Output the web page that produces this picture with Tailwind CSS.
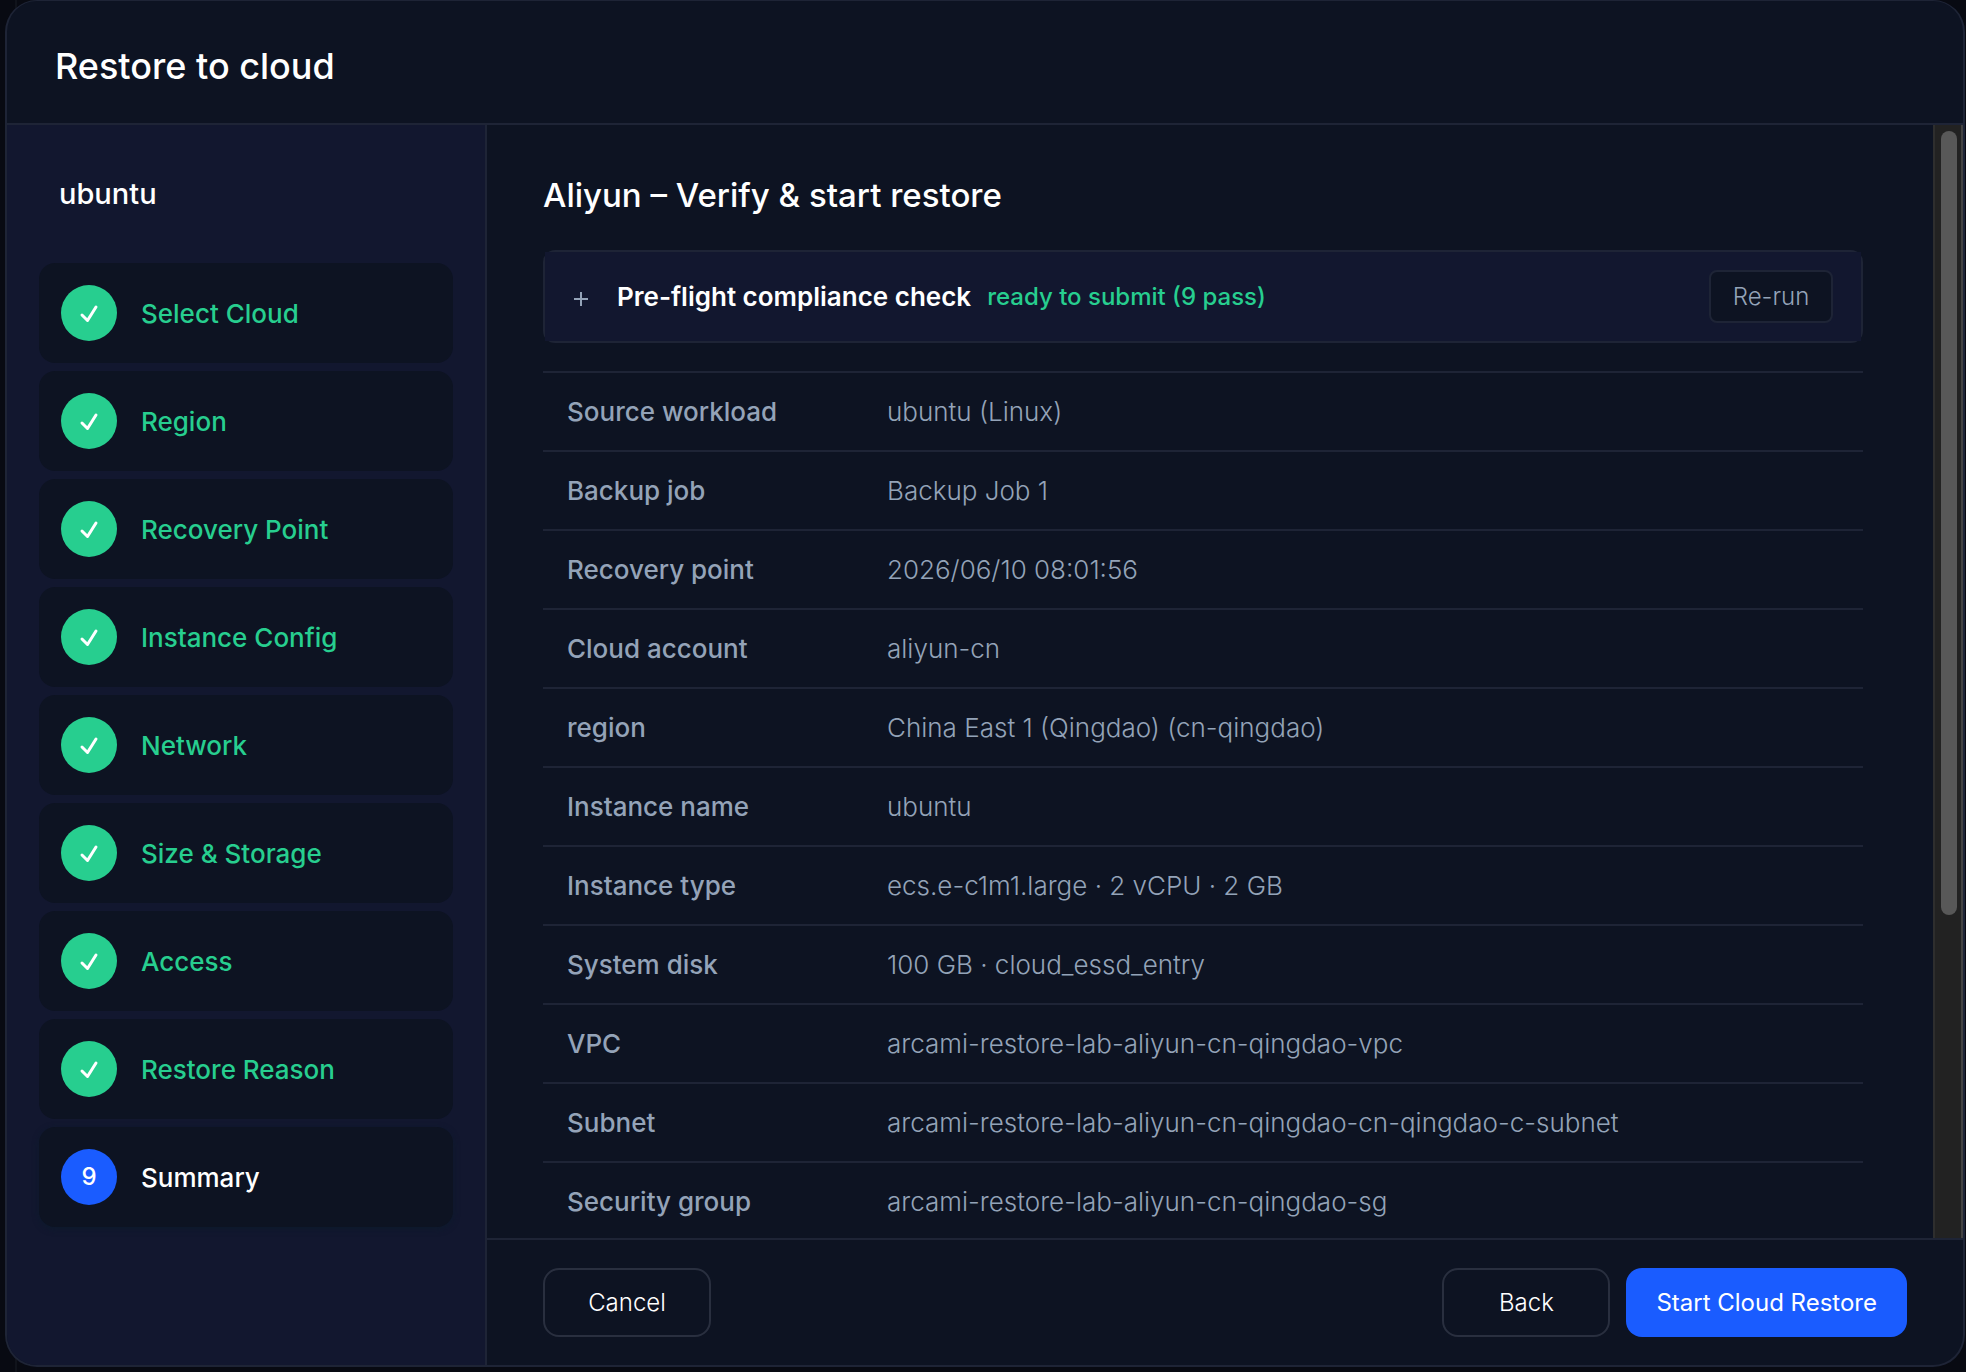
<!DOCTYPE html>
<html lang="en">
<head>
    <meta charset="UTF-8">
    <meta name="viewport" content="width=device-width, initial-scale=1.0">
    <title>Restore to cloud</title>
    <script src="https://cdn.jsdelivr.net/npm/@tailwindcss/browser@4"></script>
</head>
<body class="bg-[#080a12] font-['Inter','Noto_Sans',sans-serif] text-white">
    <!-- page behind the dialog -->
    <div class="absolute inset-y-0 left-[15px] w-[2px] bg-[#10131b]"></div>
    <div class="relative h-screen pl-[5px] pr-px pb-[5px]">
        <div role="dialog" aria-labelledby="title" class="flex h-full flex-col overflow-hidden rounded-[32px] border-2 border-t border-[#1e2436] bg-[#0d1322]">
            <header class="flex h-[124px] shrink-0 items-center border-b-2 border-[#1e2436] px-12 pt-4 pb-2">
                <h1 id="title" class="text-[36px] font-medium">Restore to cloud</h1>
            </header>
            <div class="flex min-h-0 flex-1">
                <aside class="w-[480px] shrink-0 border-r-2 border-[#1e2436] bg-[#12172f] px-8">
                    <h2 class="px-5 pt-12 pb-12 text-[29px] leading-[42px] font-medium">ubuntu</h2>
                    <ol id="steps" class="flex flex-col gap-2 text-[26px] font-medium"></ol>
                </aside>
                <div class="flex min-w-0 flex-1 flex-col">
                    <div class="flex min-h-0 flex-1">
                        <main class="min-w-0 flex-1 overflow-hidden pt-12 pr-[70px] pl-14">
                            <h2 class="text-[33px] leading-[45px] font-medium">Aliyun – Verify &amp; start restore</h2>
                            <section class="mt-8 rounded-xl border-2 border-[#1e2436]">
                                <div class="flex h-[89px] items-center bg-[#12172f] px-7">
                                    <button aria-label="Expand" class="mr-7 w-4">
                                        <svg class="mt-1 size-4" viewBox="0 0 16 16" fill="none" stroke="#94a3b8" stroke-width="2"><path d="M8 1v14M1 8h14"/></svg>
                                    </button>
                                    <span class="text-[26px] font-semibold">Pre-flight compliance check</span>
                                    <span class="ml-4 text-[24px] font-medium text-[#27ce8f]">ready to submit (9 pass)</span>
                                    <button class="ml-auto h-[53px] w-[124px] rounded-lg border-2 border-[#1e2436] bg-[#0d1322] text-[24px] font-light text-[#94a3b8]">Re-run</button>
                                </div>
                            </section>
                            <table class="mt-7 w-full border-t-2 border-[#1e2436] text-left text-[26px] text-[#94a3b8]">
                                <tbody id="summary"></tbody>
                            </table>
                        </main>
                        <!-- scrollbar -->
                        <div class="w-[30px] shrink-0 border-x-2 border-l-[#2e2e2e] border-r-[#424242] bg-[#222222] px-[6px] pt-[6px]">
                            <div class="h-[70.8%] w-4 rounded-full bg-[#585858]"></div>
                        </div>
                    </div>
                    <footer class="flex h-[127px] shrink-0 items-center gap-4 border-t-2 border-[#1e2436] px-14 text-[24px] font-light">
                        <button class="h-[69px] w-[168px] rounded-2xl border-2 border-[#292f3f]">Cancel</button>
                        <button class="ml-auto h-[69px] w-[168px] rounded-2xl border-2 border-[#292f3f]">Back</button>
                        <button class="h-[69px] rounded-2xl bg-[#1a5cff] px-[30px] font-normal">Start Cloud Restore</button>
                    </footer>
                </div>
            </div>
        </div>
    </div>

    <script>
        const steps = ['Select Cloud', 'Region', 'Recovery Point', 'Instance Config', 'Network', 'Size & Storage', 'Access', 'Restore Reason', 'Summary'];
        const rows = [
            ['Source workload', 'ubuntu (Linux)'],
            ['Backup job', 'Backup Job 1'],
            ['Recovery point', '2026/06/10 08:01:56'],
            ['Cloud account', 'aliyun-cn'],
            ['region', 'China East 1 (Qingdao) (cn-qingdao)'],
            ['Instance name', 'ubuntu'],
            ['Instance type', 'ecs.e-c1m1.large · 2 vCPU · 2 GB'],
            ['System disk', '100 GB · cloud_essd_entry'],
            ['VPC', 'arcami-restore-lab-aliyun-cn-qingdao-vpc'],
            ['Subnet', 'arcami-restore-lab-aliyun-cn-qingdao-cn-qingdao-c-subnet'],
            ['Security group', 'arcami-restore-lab-aliyun-cn-qingdao-sg'],
        ];

        document.getElementById('steps').innerHTML = steps.map((name, i) => {
            if (i === steps.length - 1) {
                return `
                <li class="flex h-[100px] items-center gap-6 rounded-2xl bg-[#0d1322] px-[22px] shadow-[0_2px_6px_#0d1a2c]" aria-current="step">
                    <span class="flex size-14 items-center justify-center rounded-full bg-[#1a5cff] text-[24px]">${i + 1}</span>
                    <span>${name}</span>
                </li>`;
            }
            return `
                <li class="flex h-[100px] items-center gap-6 rounded-2xl bg-[#0d1322] px-[22px] text-[#27ce8f]">
                    <span class="flex size-14 items-center justify-center rounded-full bg-[#27ce8f]">
                        <svg class="size-6" viewBox="0 0 24 24" fill="none" stroke="white" stroke-width="3" stroke-linecap="round" stroke-linejoin="round"><path d="M5 14L10.5 19.5L19 6"/></svg>
                    </span>
                    <span>${name.replace('&', '&amp;')}</span>
                </li>`;
        }).join('');

        document.getElementById('summary').innerHTML = rows.map(([label, value]) => `
            <tr class="h-[79px] border-b-2 border-[#1e2436]">
                <th class="w-[320px] pl-6 font-medium">${label}</th>
                <td class="pl-6 font-light">${value}</td>
            </tr>`).join('');
    </script>
</body>
</html>
